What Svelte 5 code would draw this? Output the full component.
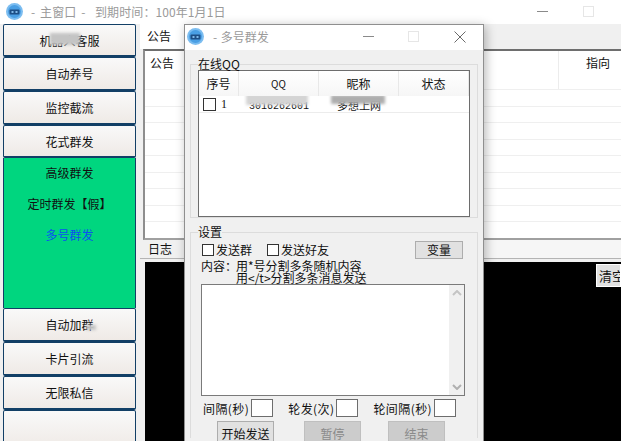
<script>
    const navTop = ['机器人客服', '自动养号', '监控截流', '花式群发'];
    const navBottom = ['自动加群', '卡片引流', '无限私信', ''];
    const noticeRows = [0, 1, 2, 3, 4, 5, 6, 7, 8];
</script>

{#snippet logo()}
    <svg class="logo" width="17" height="17" viewBox="0 0 17 17">
        <circle cx="8.5" cy="8.5" r="8.5" fill="#7cbdf0" />
        <circle cx="8.5" cy="8.5" r="6.5" fill="#4a9fe4" />
        <rect x="3.5" y="6.5" width="10" height="5" rx="1" fill="#1d4f86" />
        <rect x="5.5" y="8" width="2" height="2" fill="#7fb8e8" />
        <rect x="9.5" y="8" width="2" height="2" fill="#7fb8e8" />
    </svg>
{/snippet}

<div class="window">
    <header class="titlebar">
        {@render logo()}
        <span class="title">- 主窗口 -&nbsp; 到期时间：100年1月1日</span>
        <span class="win-btns main-btns">
            <span class="min"></span>
            <span class="max"></span>
        </span>
    </header>

    <div class="body">
        <nav class="nav">
            {#each navTop as item, i}
                <button class="nav_btn" class:short={i === 0 || i === 3}>
                    {item}
                    {#if i === 0}<b class="smear nav_s1"></b>{/if}
                </button>
            {/each}
            <div class="nav_open">
                <p>高级群发</p>
                <p>定时群发【假】</p>
                <p class="active">多号群发</p>
            </div>
            {#each navBottom as item, i}
                <button class="nav_btn">
                    {item}
                    {#if i === 0}<b class="smear nav_s2"></b>{/if}
                </button>
            {/each}
        </nav>

        <main class="content">
            <div class="tab">公告</div>
            <div class="notice">
                <div class="notice_head">
                    <span>公告</span>
                    <span>指向</span>
                </div>
                {#each noticeRows as row}
                    <div class="notice_row" data-row={row}></div>
                {/each}
            </div>
            <div class="log_strip">
                <div class="tab log_tab">日志</div>
            </div>
            <div class="log">
                <button class="clear">清空</button>
            </div>
        </main>
    </div>

    <section class="dialog">
        <header class="dialog_title">
            {@render logo()}
            <span class="title">- 多号群发</span>
            <span class="win-btns">
                <span class="min"></span>
                <span class="max"></span>
                <svg width="12" height="12" viewBox="0 0 12 12" class="close">
                    <path d="M0.5 0.5 L11.5 11.5 M11.5 0.5 L0.5 11.5" stroke="#6a6a6a" fill="none" />
                </svg>
            </span>
        </header>

        <div class="dialog_body">
            <fieldset class="group online">
                <legend>在线QQ</legend>
                <div class="qq_table">
                    <div class="qq_head">
                        <span>序号</span>
                        <span class="qq">QQ</span>
                        <span>昵称</span>
                        <span>状态</span>
                    </div>
                    <div class="qq_row">
                        <span class="first"><i class="check"></i>1</span>
                        <span class="masked mono">3016262601<b class="smear s1"></b></span>
                        <span class="masked">多想上网<b class="smear s2"></b></span>
                        <span></span>
                    </div>
                </div>
            </fieldset>

            <fieldset class="group settings">
                <legend>设置</legend>
                <div class="send_opts">
                    <span class="opt"><i class="check"></i>发送群</span>
                    <span class="opt"><i class="check"></i>发送好友</span>
                    <button class="sys var_btn">变量</button>
                </div>
                <div class="hint">
                    <span class="hint_label">内容：</span>
                    <span>用*号分割多条随机内容<br />用&lt;/t&gt;分割多条消息发送</span>
                </div>
                <div class="textbox">
                    <div class="scroll">
                        <svg width="10" height="6" viewBox="0 0 10 6"><path d="M1 5 L5 1 L9 5" stroke="#c4c4c4" stroke-width="2" fill="none" /></svg>
                        <svg width="10" height="6" viewBox="0 0 10 6"><path d="M1 1 L5 5 L9 1" stroke="#b0b0b0" stroke-width="2" fill="none" /></svg>
                    </div>
                </div>
                <div class="intervals">
                    <span class="field">间隔(秒)<i class="input"></i></span>
                    <span class="field">轮发(次)<i class="input"></i></span>
                    <span class="field">轮间隔(秒)<i class="input"></i></span>
                </div>
                <div class="actions">
                    <button class="sys start">开始发送</button>
                    <button class="sys off">暂停</button>
                    <button class="sys off end">结束</button>
                </div>
            </fieldset>
        </div>
    </section>
</div>

<style>
    :global(body) {
        margin: 0;
        background: #fff;
    }
    .window {
        position: relative;
        width: 621px;
        height: 441px;
        overflow: hidden;
        background: #f0f0f0;
        font-family: "Noto Sans CJK SC", "Liberation Sans", sans-serif;
        font-size: 12px;
        color: #111;
    }
    .titlebar {
        height: 24px;
        display: flex;
        align-items: center;
        background: #fff;
        padding: 0 0 1px 6px;
        box-sizing: border-box;
    }
    .logo {
        flex: none;
    }
    .title {
        margin-left: 8px;
        color: #9a9a9a;
        white-space: nowrap;
        word-spacing: 1px;
    }
    .titlebar .title {
        word-spacing: 2px;
        letter-spacing: 0.1px;
    }
    .win-btns {
        margin-left: auto;
        display: flex;
        align-items: center;
    }
    .main-btns {
        position: absolute;
        left: 537px;
        top: 6px;
        margin: 0;
    }
    .min {
        width: 11px;
        height: 1px;
        background: #8a8a8a;
    }
    .max {
        width: 9px;
        height: 9px;
        border: 1px solid #e6e6e6;
        margin-left: 35px;
    }
    .body {
        display: flex;
        height: 417px;
    }
    .nav {
        width: 133px;
        margin-left: 3px;
        flex: none;
        display: flex;
        flex-direction: column;
    }
    .nav_btn {
        position: relative;
        height: 34px;
        flex: none;
        padding: 0;
        border: 1px solid #123f66;
        border-bottom-width: 2px;
        border-radius: 2px;
        background: linear-gradient(#f9f9f9, #efeae6);
        font: inherit;
        color: #111;
    }
    .nav_btn.short {
        height: 33px;
    }
    .nav_btn:last-child {
        height: 40px;
    }
    .nav_open {
        height: 150px;
        flex: none;
        box-sizing: border-box;
        background: #00d67f;
        border: 1px solid #123f66;
        border-width: 0 1px;
        padding-top: 6px;
        display: flex;
        flex-direction: column;
        align-items: center;
    }
    .nav_open p {
        margin: 0 0 13px;
        height: 18px;
        line-height: 18px;
    }
    .nav_open .active {
        color: #0c50f0;
    }
    .smear {
        position: absolute;
        display: block;
        height: 11px;
        background: #c4c4c4;
        filter: blur(1.5px);
    }
    .nav_s1 {
        left: 46px;
        top: 8px;
        width: 30px;
        height: 12px;
    }
    .nav_s2 {
        left: 82px;
        top: 16px;
        width: 10px;
        height: 5px;
    }
    .content {
        flex: 1;
        margin-left: 4px;
        min-width: 0;
    }
    .tab {
        width: 44px;
        height: 25px;
        line-height: 23px;
        padding-left: 7px;
        background: #fff;
        box-sizing: border-box;
    }
    .notice {
        margin-left: 3px;
        height: 191px;
        box-sizing: border-box;
        overflow: hidden;
        background: #fff;
        border-top: 2px solid #6e6e6e;
        border-left: 2px solid #8e8e8e;
        border-bottom: 2px solid #a0a0a0;
    }
    .notice_head {
        height: 39px;
        display: flex;
        justify-content: space-between;
        padding: 3px 11px 0 5px;
        box-sizing: border-box;
        border-bottom: 1px solid #efefef;
        background: linear-gradient(90deg, transparent 413px, #ececec 413px, #ececec 414px, transparent 414px);
    }
    .notice_row {
        height: 16.5px;
        box-sizing: border-box;
        border-bottom: 1px solid #efefef;
    }
    .log_strip {
        height: 19px;
        box-sizing: border-box;
        border-bottom: 1px solid #b4b4b4;
        background: #f6f6f6;
        margin-bottom: 3px;
    }
    .log_tab {
        height: 18px;
        line-height: 18px;
        padding-left: 8px;
        background: #f0f0f0;
    }
    .log {
        margin-left: 5px;
        height: 179px;
        background: #000;
        display: flex;
        justify-content: flex-end;
        align-items: flex-start;
        padding-top: 2px;
        box-sizing: border-box;
    }
    .clear {
        width: 25px;
        height: 23px;
        padding: 0 0 0 2px;
        border: 1px solid #fff;
        background: #e1e1e1;
        font: inherit;
        font-size: 13px;
        color: #111;
        white-space: nowrap;
        overflow: hidden;
        text-align: left;
    }

    .dialog {
        position: absolute;
        left: 184px;
        top: 24px;
        width: 300px;
        height: 417px;
        background: #f0f0f0;
        border: 1px solid #8f8f8f;
        border-bottom: 0;
        box-sizing: border-box;
        box-shadow: 2px 2px 10px rgba(0, 0, 0, 0.28);
    }
    .dialog_title {
        height: 25px;
        display: flex;
        align-items: center;
        background: #fff;
        padding: 0 17px 2px 2px;
        box-sizing: border-box;
    }
    .dialog_title .title {
        margin-left: 9px;
    }
    .dialog_title .max {
        margin-left: 34px;
    }
    .close {
        margin-left: 35px;
    }
    .dialog_body {
        display: flex;
        flex-direction: column;
    }
    .group {
        margin: 0 5px;
        padding: 0;
        border: 1px solid #dcdcdc;
        min-width: 0;
        box-sizing: border-box;
    }
    legend {
        padding: 0;
        line-height: 14px;
        font-size: 12px;
    }
    .online {
        margin-top: 7px;
        height: 161px;
        padding: 0 7px;
    }
    .qq_table {
        margin-top: -1px;
        height: 147px;
        box-sizing: border-box;
        background: #fff;
        border: 1px solid #6d6d6d;
    }
    .qq_head,
    .qq_row {
        display: grid;
        grid-template-columns: 40px 80px 80px 1fr;
    }
    .qq_head {
        height: 25px;
        align-items: center;
        text-align: center;
        background: linear-gradient(#fff, #f6f6f6);
    }
    .qq_head span {
        line-height: 26px;
        border-right: 1px solid #e8e8e8;
        height: 25px;
    }
    .qq_head .qq {
        font-size: 10px;
    }
    .qq_row {
        height: 16px;
        line-height: 18px;
        border-bottom: 1px solid #ececec;
    }
    .qq_row span {
        position: relative;
        text-align: center;
        font-size: 11px;
        overflow: hidden;
        white-space: nowrap;
    }
    .qq_row .first {
        display: flex;
        align-items: center;
        gap: 5px;
        padding-left: 4px;
        font-family: "Liberation Serif", serif;
        font-size: 12px;
    }
    .check {
        display: inline-block;
        width: 10px;
        height: 10px;
        border: 1px solid #333;
        background: #fff;
        flex: none;
    }
    .qq_row .check {
        width: 11px;
        height: 11px;
    }
    .qq_row .mono {
        font-family: "Liberation Mono", monospace;
        font-size: 10px;
        line-height: 21px;
    }
    .s1 {
        top: -2px;
        left: 7px;
        width: 62px;
        height: 11px;
        background: #d4d4d4;
    }
    .s2 {
        top: -1px;
        left: 12px;
        width: 54px;
        height: 9px;
        background: #aeaeae;
    }
    .settings {
        margin-top: 7px;
        height: 213px;
        padding: 0 10px;
        border-bottom: 0;
    }
    .settings legend {
        margin-left: -3px;
    }
    .send_opts {
        display: flex;
        align-items: center;
        height: 20px;
        margin-top: 1px;
        margin-left: 1px;
    }
    .opt {
        display: flex;
        align-items: center;
        gap: 2px;
        width: 65px;
        line-height: 14px;
    }
    .opt:nth-child(2) {
        width: auto;
    }
    .sys {
        padding: 0;
        font: inherit;
        color: #111;
        background: #e1e1e1;
        border: 1px solid #adadad;
    }
    .var_btn {
        width: 48px;
        height: 18px;
        line-height: 14px;
        margin-left: auto;
        margin-right: 4px;
    }
    .hint {
        display: flex;
        line-height: 12px;
        white-space: nowrap;
        height: 20px;
    }
    .hint_label {
        width: 35px;
        flex: none;
    }
    .textbox {
        margin-top: 4px;
        width: 264px;
        height: 112px;
        box-sizing: border-box;
        background: #fff;
        border: 1px solid #7a7a7a;
        display: flex;
        justify-content: flex-end;
    }
    .scroll {
        width: 15px;
        background: #f0f0f0;
        display: flex;
        flex-direction: column;
        justify-content: space-between;
        align-items: center;
        padding: 5px 0;
    }
    .intervals {
        display: flex;
        justify-content: space-between;
        margin: 3px 0 0 2px;
        width: 253px;
    }
    .field {
        display: flex;
        align-items: center;
        gap: 2px;
        white-space: nowrap;
        letter-spacing: 0.4px;
    }
    .input {
        width: 20px;
        height: 16px;
        background: #fff;
        border: 1px solid #6d6d6d;
    }
    .actions {
        display: flex;
        margin-top: 4px;
        margin-left: 16px;
        gap: 30px;
    }
    .actions .sys {
        width: 57px;
        height: 24px;
        flex: none;
    }
    .actions .end {
        margin-left: -3px;
    }
    .actions .off {
        background: #cccccc;
        border-color: #bfbfbf;
        color: #8a8a8a;
    }
</style>
